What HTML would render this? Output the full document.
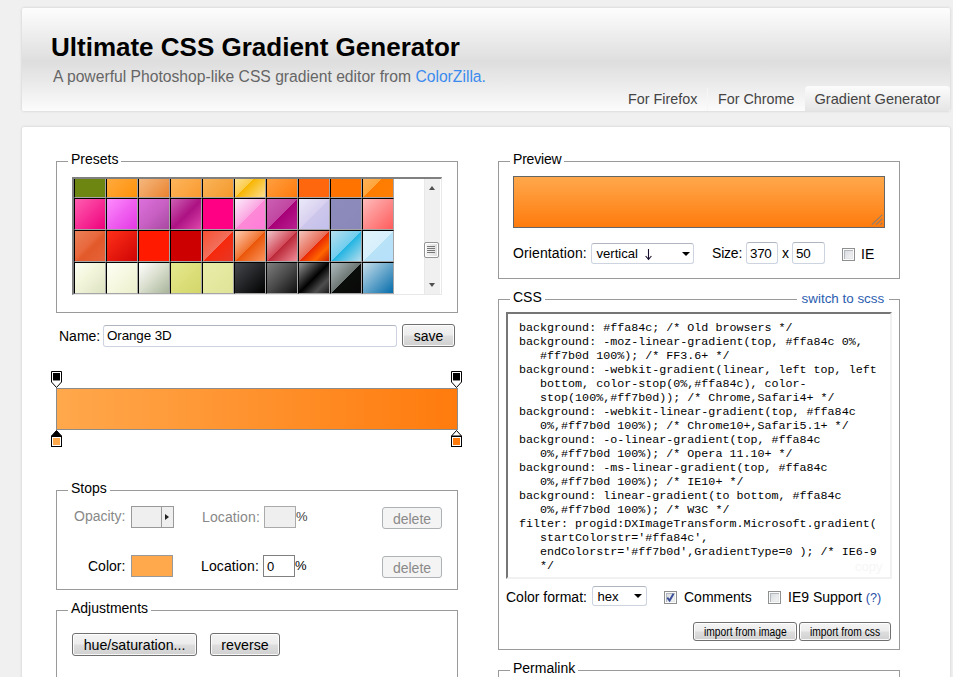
<!DOCTYPE html>
<html>
<head>
<meta charset="utf-8">
<title>Ultimate CSS Gradient Generator</title>
<style>
*{box-sizing:border-box;margin:0;padding:0}
html,body{width:953px;height:677px;overflow:hidden}
body{background:#f0f0f0;font-family:"Liberation Sans",sans-serif;font-size:14px;color:#000;position:relative}
.abs{position:absolute}
#header{position:absolute;left:22px;top:8px;width:928px;height:103px;border-radius:2px;
 background:linear-gradient(to bottom,#fdfdfd 0%,#f0f0f0 22%,#dedede 52%,#ececec 76%,#fcfcfc 100%);
 box-shadow:0 0 3px rgba(0,0,0,.16)}
#title{position:absolute;left:51px;top:32px;font-size:26px;font-weight:bold;line-height:30px;white-space:nowrap;color:#000}
#sub{position:absolute;left:53px;top:67px;font-size:15.68px;line-height:20px;color:#666;white-space:nowrap}
#sub a{color:#3b8bee;text-decoration:none}
.tab{position:absolute;top:86px;height:25px;font-size:14.35px;line-height:26px;color:#444;white-space:nowrap}
#tab3{left:805px;width:145px;background:linear-gradient(to bottom,#fcfcfc,#e5e5e5);border-radius:4px 4px 2px 0;padding-left:9.5px;font-size:14.6px}
#main{position:absolute;left:22px;top:127px;width:928px;height:600px;background:#fff;border-radius:2px;box-shadow:0 0 3px rgba(0,0,0,.16)}
.fs{position:absolute;border:1px solid #9a9a9a}
.lg{position:absolute;background:#fff;font-size:14px;line-height:16px;white-space:nowrap;padding:0 3px}
.t{position:absolute;white-space:nowrap;font-size:14px;line-height:16px}
.inp{position:absolute;background:#fff;border:1px solid #cdd4e0;border-top-color:#b0b5c0;border-radius:3px;font-size:13.4px;letter-spacing:-.3px;line-height:19px;padding-left:3px;white-space:nowrap}
.btn{position:absolute;border:1px solid #707070;border-radius:3px;text-align:center;white-space:nowrap;
 background:linear-gradient(to bottom,#f4f4f4 0%,#ececec 48%,#dedede 52%,#d0d0d0 100%);box-shadow:inset 0 0 0 1px rgba(255,255,255,.85)}
.btn.dis{border-color:#adb2b5;background:#f4f4f4;color:#8a8a8a;box-shadow:none}
.cb{position:absolute;width:13px;height:13px;border:1px solid #8e8f8f;background:linear-gradient(135deg,#d3d7dc,#f8f8f8);box-shadow:inset 0 0 0 1px #fbfbfb,inset 2px 2px 0 0 #b3b8be,inset -2px -2px 0 0 #e4e6e8}
#sw{position:absolute;left:72px;top:177px;width:370px;height:118px;border:2px solid #808080;border-right:1px solid #e8e8e8;border-bottom:1px solid #e8e8e8;overflow:hidden;background:#fff}
#sw i{position:absolute;width:32px;height:32px;border:1px solid #000;border-right-color:#a6a6a6;border-bottom-color:#a6a6a6}
#css{position:absolute;left:506px;top:312px;width:386px;height:267px;border:2px solid #767676;border-right:2px solid #f1f1f1;border-bottom:2px solid #f1f1f1;background:#fff}
#css pre{position:absolute;left:11px;top:7px;font-family:"Liberation Mono",monospace;font-size:11.7px;line-height:14px;color:#000}
</style>
</head>
<body>
<div id="header">
</div>
<div id="title">Ultimate CSS Gradient Generator</div>
<div id="sub">A powerful Photoshop-like CSS gradient editor from <a>ColorZilla.</a></div>
<div class="abs" style="left:707px;top:88px;width:1px;height:23px;background:#f6f6f6"></div>
<div class="tab" style="left:628px">For Firefox</div>
<div class="tab" style="left:718px">For Chrome</div>
<div class="tab" id="tab3">Gradient Generator</div>
<div id="main"></div>

<!-- PRESETS -->
<div class="fs" style="left:56px;top:161px;width:402px;height:152px"></div>
<div class="lg" style="left:68px;top:151px">Presets</div>
<div id="sw">
<i style="left:0px;top:-13px;background:linear-gradient(135deg,#6d8511,#6d8511)"></i>
<i style="left:32px;top:-13px;background:linear-gradient(135deg,#ffaf4b,#ff920a)"></i>
<i style="left:64px;top:-13px;background:linear-gradient(135deg,#f8c28e,#f1a562 50%,#e98330)"></i>
<i style="left:96px;top:-13px;background:linear-gradient(135deg,#fdbc66,#fa9a30)"></i>
<i style="left:128px;top:-13px;background:linear-gradient(135deg,#fbbb64,#f4992c)"></i>
<i style="left:160px;top:-13px;background:linear-gradient(135deg,#fceabb,#fccd4d 50%,#f8b500 51%,#fbdf93)"></i>
<i style="left:192px;top:-13px;background:linear-gradient(135deg,#ffa84c,#ff7b0d)"></i>
<i style="left:224px;top:-13px;background:linear-gradient(135deg,#ff670f,#ff670f)"></i>
<i style="left:256px;top:-13px;background:linear-gradient(135deg,#ff7400,#ff7400)"></i>
<i style="left:288px;top:-13px;background:linear-gradient(135deg,#ffb76b,#ffa73d 50%,#ff7c00 51%,#ff7f04)"></i>
<i style="left:0px;top:19px;background:linear-gradient(135deg,#ff5db1,#ef017c)"></i>
<i style="left:32px;top:19px;background:linear-gradient(135deg,#ff8cff,#f060f0 50%,#e438e4)"></i>
<i style="left:64px;top:19px;background:linear-gradient(135deg,#dc70dc,#c860c4 50%,#a848a0)"></i>
<i style="left:96px;top:19px;background:linear-gradient(135deg,#cb60b3,#ad1283 52%,#de47ac)"></i>
<i style="left:128px;top:19px;background:linear-gradient(135deg,#ff0084,#ff0084)"></i>
<i style="left:160px;top:19px;background:linear-gradient(135deg,#fcecfc,#fba6e1 50%,#fd89d7 51%,#ff7cd8)"></i>
<i style="left:192px;top:19px;background:linear-gradient(135deg,#cb60b3,#c146a1 50%,#a80077 51%,#b82090)"></i>
<i style="left:224px;top:19px;background:linear-gradient(135deg,#ebe9f9,#d8d0ef 50%,#cec7ec 51%,#c1bfea)"></i>
<i style="left:256px;top:19px;background:linear-gradient(135deg,#8c8cbc,#8a88b8)"></i>
<i style="left:288px;top:19px;background:linear-gradient(135deg,#febbbb,#fe9090 45%,#ff5c5c)"></i>
<i style="left:0px;top:51px;background:linear-gradient(135deg,#ea8058,#e8683c 45%,#e2592a 55%,#e6633a)"></i>
<i style="left:32px;top:51px;background:linear-gradient(135deg,#ff3019,#cf0404)"></i>
<i style="left:64px;top:51px;background:linear-gradient(135deg,#ff1a00,#ff1a00)"></i>
<i style="left:96px;top:51px;background:linear-gradient(135deg,#cc0000,#cc0000)"></i>
<i style="left:128px;top:51px;background:linear-gradient(135deg,#f85032,#f16f5c 50%,#f6290c 51%,#f02f17 71%,#e73827)"></i>
<i style="left:160px;top:51px;background:linear-gradient(135deg,#feccb1,#f17432 50%,#ea5507 51%,#fb955e)"></i>
<i style="left:192px;top:51px;background:linear-gradient(135deg,#efc5ca,#d24b5a 50%,#ba2737 51%,#f18e99)"></i>
<i style="left:224px;top:51px;background:linear-gradient(135deg,#f3c5bd,#e86c57 50%,#ea2803 51%,#ff6600 75%,#c72200)"></i>
<i style="left:256px;top:51px;background:linear-gradient(135deg,#b7deed,#71ceef 50%,#21b4e2 51%,#b7deed)"></i>
<i style="left:288px;top:51px;background:linear-gradient(135deg,#e0f3fa,#d8f0fc 50%,#b8e2f6 51%,#b6dffd)"></i>
<i style="left:0px;top:83px;background:linear-gradient(135deg,#fcfff4,#f4f6dc 40%,#dde2c2)"></i>
<i style="left:32px;top:83px;background:linear-gradient(135deg,#fefff6,#f4f6dc 60%,#ecefcc)"></i>
<i style="left:64px;top:83px;background:linear-gradient(135deg,#ffffff,#d8ddcc 50%,#a9b59c)"></i>
<i style="left:96px;top:83px;background:linear-gradient(135deg,#e6e890,#dcdf7a 50%,#d2d66a)"></i>
<i style="left:128px;top:83px;background:linear-gradient(135deg,#e8eca8,#e4e8a0 50%,#e0e498)"></i>
<i style="left:160px;top:83px;background:linear-gradient(135deg,#45484d,#000000)"></i>
<i style="left:192px;top:83px;background:linear-gradient(135deg,#7d7e7d,#4a4a4a 50%,#0e0e0e)"></i>
<i style="left:224px;top:83px;background:linear-gradient(135deg,#959595,#0d0d0d 46%,#010101 50%,#0a0a0a 53%,#4e4e4e 76%,#383838 87%,#1b1b1b)"></i>
<i style="left:256px;top:83px;background:linear-gradient(135deg,#aebcbf,#6e7774 50%,#0a0e0a 51%,#0a0809)"></i>
<i style="left:288px;top:83px;background:linear-gradient(135deg,#c5deea,#8abbd7 31%,#066dab)"></i>
<b style="position:absolute;left:350px;top:0;width:16px;height:115px;background:#f0f0f0;border-left:1px solid #e8e8e8"></b>
<b style="position:absolute;left:354.5px;top:7px;width:0;height:0;border-bottom:4px solid #505050;border-left:3.5px solid transparent;border-right:3.5px solid transparent"></b>
<b style="position:absolute;left:354.5px;top:104px;width:0;height:0;border-top:4px solid #505050;border-left:3.5px solid transparent;border-right:3.5px solid transparent"></b>
<b style="position:absolute;left:350px;top:63px;width:15px;height:16px;border:1px solid #959595;border-radius:2px;background:linear-gradient(to right,#f6f6f6,#dcdcdc);box-shadow:inset 0 0 0 1px #fff"></b>
<b style="position:absolute;left:353px;top:67px;width:8px;height:1px;background:#777;box-shadow:0 2px 0 #777,0 4px 0 #777,0 6px 0 #777"></b>
</div>

<!-- NAME -->
<div class="t" style="left:59px;top:328px">Name:</div>
<div class="inp" style="left:103px;top:325px;width:294px;height:22px;line-height:20px;letter-spacing:-.1px">Orange 3D</div>
<div class="btn" style="left:402px;top:324px;width:53px;height:23px;font-size:14px;line-height:23px">save</div>

<!-- GRADIENT BAR -->
<div class="abs" style="left:56px;top:388px;width:402px;height:42px;border:1px solid #8c8c8c;background:linear-gradient(to right,#ffa84c,#ff7b0d)"></div>
<!--MARKERS-->
<svg class="abs" style="left:51px;top:371px" width="12" height="18" viewBox="0 0 12 18"><path d="M0.5 0.5H10.5V11L5.5 16.5L0.5 11Z" fill="#fff" stroke="#000"/><rect x="2" y="2" width="7" height="7" fill="#000"/><rect x="2" y="9" width="7" height="1" fill="#888"/></svg>
<svg class="abs" style="left:451px;top:371px" width="12" height="18" viewBox="0 0 12 18"><path d="M0.5 0.5H10.5V11L5.5 16.5L0.5 11Z" fill="#fff" stroke="#000"/><rect x="2" y="2" width="7" height="7" fill="#000"/><rect x="2" y="9" width="7" height="1" fill="#888"/></svg>
<svg class="abs" style="left:51px;top:430px" width="12" height="18" viewBox="0 0 12 18"><path d="M5.5 0.5L0.5 6H10.5Z" fill="#000" stroke="#000"/><rect x="0.5" y="6.5" width="10" height="10" fill="#fff" stroke="#000"/><rect x="2" y="8" width="7" height="7" fill="#ffa84c"/></svg>
<svg class="abs" style="left:451px;top:430px" width="12" height="18" viewBox="0 0 12 18"><path d="M5.5 0.5L0.5 6H10.5Z" fill="#fff" stroke="#000"/><rect x="0.5" y="6.5" width="10" height="10" fill="#fff" stroke="#000"/><rect x="2" y="8" width="7" height="7" fill="#ff7b0d"/></svg>

<!-- STOPS -->
<div class="fs" style="left:56px;top:490px;width:402px;height:100px"></div>
<div class="lg" style="left:68px;top:480px">Stops</div>
<div class="t" style="left:74px;top:508px;color:#888">Opacity:</div>
<div class="abs" style="left:131px;top:506px;width:43px;height:22px;border:1px solid #999;background:#efefef"></div>
<div class="abs" style="left:161px;top:507px;width:1px;height:20px;background:#999"></div>
<div class="abs" style="left:165px;top:514px;width:0;height:0;border-left:4px solid #222;border-top:3.5px solid transparent;border-bottom:3.5px solid transparent"></div>
<div class="t" style="left:202px;top:509px;color:#888;letter-spacing:.12px">Location:</div>
<div class="abs" style="left:264px;top:506px;width:32px;height:22px;border:1px solid #aaa;background:#efefef"></div>
<div class="t" style="left:296px;top:509px;color:#444;font-size:13px">%</div>
<div class="btn dis" style="left:382px;top:507px;width:60px;height:22px;font-size:14px;line-height:22px">delete</div>

<div class="t" style="left:88px;top:558px">Color:</div>
<div class="abs" style="left:131px;top:555px;width:42px;height:22px;border:1px solid #999;background:#ffa84c"></div>
<div class="t" style="left:201px;top:558px;letter-spacing:.12px">Location:</div>
<div class="abs" style="left:263px;top:555px;width:32px;height:22px;border:1px solid #808080;background:#fff;font-size:13px;line-height:22px;padding-left:3px">0</div>
<div class="t" style="left:295px;top:558px;font-size:13px">%</div>
<div class="btn dis" style="left:382px;top:556px;width:60px;height:22px;font-size:14px;line-height:22px">delete</div>

<!-- ADJUSTMENTS -->
<div class="fs" style="left:56px;top:610px;width:402px;height:100px"></div>
<div class="lg" style="left:68px;top:600px">Adjustments</div>
<div class="btn" style="left:72px;top:633px;width:125px;height:23px;font-size:14.2px;line-height:22px">hue/saturation...</div>
<div class="btn" style="left:210px;top:633px;width:70px;height:23px;font-size:14.2px;line-height:22px">reverse</div>

<!-- PREVIEW -->
<div class="fs" style="left:498px;top:161px;width:402px;height:118px"></div>
<div class="lg" style="left:510px;top:151px;letter-spacing:-.2px">Preview</div>
<div class="abs" style="left:513px;top:176px;width:372px;height:52px;border:1px solid #666;background:linear-gradient(to bottom,#ffa84c,#ff7b0d)"></div>
<svg class="abs" style="left:870px;top:213px" width="14" height="14" viewBox="0 0 14 14"><path d="M12.2 1.8L1.8 11.6M12.2 5.8L6 11.6M12.2 9.8L10.2 11.6" stroke="#8b7d6e" stroke-width="1.1" fill="none"/></svg>
<div class="t" style="left:513px;top:245px;letter-spacing:.12px">Orientation:</div>
<div class="inp" style="left:591px;top:243px;width:103px;height:21px;padding-left:4.5px;line-height:20px;font-size:13.1px;letter-spacing:0">vertical</div>
<svg class="abs" style="left:644px;top:248px" width="10" height="13" viewBox="0 0 10 13"><path d="M4.5 1V11M1.6 8L4.5 11.3L7.4 8" stroke="#1a1030" stroke-width="1.1" fill="none"/></svg>
<div class="abs" style="left:682px;top:252px;width:0;height:0;border-top:4px solid #000;border-left:4px solid transparent;border-right:4px solid transparent"></div>
<div class="t" style="left:712px;top:245px;letter-spacing:-.2px">Size:</div>
<div class="inp" style="left:746px;top:242px;width:32px;height:22px;line-height:21px">370</div>
<div class="t" style="left:782px;top:245px">x</div>
<div class="inp" style="left:792px;top:242px;width:33px;height:22px;line-height:21px">50</div>
<div class="cb" style="left:842px;top:248px"></div>
<div class="t" style="left:861px;top:246px">IE</div>

<!-- CSS -->
<div class="fs" style="left:498px;top:299px;width:402px;height:351px"></div>
<div class="lg" style="left:510px;top:289px">CSS</div>
<div class="lg" style="left:796.6px;top:291px;font-size:13.4px;color:#2a5db0;padding:0 5px">switch to scss</div>
<div id="css"><pre>background: #ffa84c; /* Old browsers */
background: -moz-linear-gradient(top, #ffa84c 0%,
   #ff7b0d 100%); /* FF3.6+ */
background: -webkit-gradient(linear, left top, left
   bottom, color-stop(0%,#ffa84c), color-
   stop(100%,#ff7b0d)); /* Chrome,Safari4+ */
background: -webkit-linear-gradient(top, #ffa84c
   0%,#ff7b0d 100%); /* Chrome10+,Safari5.1+ */
background: -o-linear-gradient(top, #ffa84c
   0%,#ff7b0d 100%); /* Opera 11.10+ */
background: -ms-linear-gradient(top, #ffa84c
   0%,#ff7b0d 100%); /* IE10+ */
background: linear-gradient(to bottom, #ffa84c
   0%,#ff7b0d 100%); /* W3C */
filter: progid:DXImageTransform.Microsoft.gradient(
   startColorstr='#ffa84c',
   endColorstr='#ff7b0d',GradientType=0 ); /* IE6-9
   */</pre></div>
<div class="t" style="left:855px;top:559px;color:#f6f6f6;font-size:13px">copy</div>
<div class="t" style="left:506px;top:589px">Color format:</div>
<div class="inp" style="left:592px;top:586px;width:55px;height:20px;padding-left:4.5px;line-height:19px;font-size:13.1px;letter-spacing:0">hex</div>
<div class="abs" style="left:634px;top:594px;width:0;height:0;border-top:4px solid #000;border-left:4px solid transparent;border-right:4px solid transparent"></div>
<div class="cb" style="left:664px;top:591px"></div>
<svg class="abs" style="left:664px;top:591px" width="13" height="13" viewBox="0 0 13 13"><path d="M3.3 6.6L5.6 9.5L9.5 2.7" stroke="#3a4d98" stroke-width="1.9" fill="none"/></svg>
<div class="t" style="left:684px;top:589px">Comments</div>
<div class="cb" style="left:768px;top:591px"></div>
<div class="t" style="left:788px;top:589px">IE9 Support <span style="color:#2a4fa8;font-size:12.6px">(?)</span></div>
<div class="btn" style="left:693px;top:622px;width:104px;height:19px;font-size:12px;line-height:19px"><span style="display:inline-block;transform:scaleX(.855)">import from image</span></div>
<div class="btn" style="left:799px;top:622px;width:92px;height:19px;font-size:12px;line-height:19px"><span style="display:inline-block;transform:scaleX(.855)">import from css</span></div>

<!-- PERMALINK -->
<div class="fs" style="left:498px;top:670px;width:402px;height:60px"></div>
<div class="lg" style="left:510px;top:660px">Permalink</div>
</body>
</html>
